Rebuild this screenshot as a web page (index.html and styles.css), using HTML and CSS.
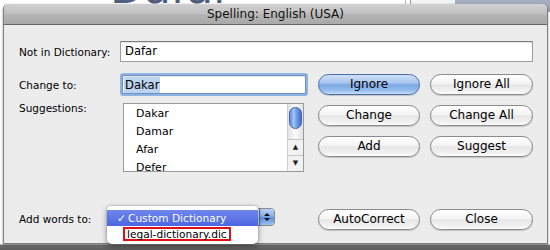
FILE: index.html
```html
<!DOCTYPE html>
<html lang="en">
<head>
    <meta charset="UTF-8">
    <meta name="viewport" content="width=device-width, initial-scale=1.0">
    <title>Spelling: English (USA)</title>
    <link rel="stylesheet" href="styles.css">
</head>
<body>
    <div class="screen">
        <!-- document window behind the sheet -->
        <div class="doc">
            <div class="doc-page">
                <span class="doc-word">Dafar</span>
            </div>
            <div class="doc-scroll"></div>
            <div class="doc-side"></div>
        </div>

        <div class="dialog">
            <div class="titlebar">Spelling: English (USA)</div>
            <div class="dialog-body">
                <div class="row-top">
                    <span class="lbl">Not in Dictionary:</span>
                    <div class="field field-wide">Dafar</div>
                </div>

                <div class="main">
                    <div class="left-col">
                        <div class="change-row">
                            <span class="lbl">Change to:</span>
                            <div class="focus-ring">
                                <div class="field field-change"><span class="sel">Dakar</span></div>
                            </div>
                        </div>
                        <div class="sugg-row">
                            <span class="lbl lbl-sugg">Suggestions:</span>
                            <div class="list">
                                <div class="list-items">
                                    <div class="list-item">Dakar</div>
                                    <div class="list-item">Damar</div>
                                    <div class="list-item">Afar</div>
                                    <div class="list-item">Defer</div>
                                </div>
                                <div class="vscroll">
                                    <div class="track"><div class="thumb"></div></div>
                                    <div class="arrow arrow-up">&#9650;</div>
                                    <div class="arrow arrow-down">&#9660;</div>
                                </div>
                            </div>
                        </div>
                    </div>
                    <div class="btn-grid">
                        <button class="btn btn-default">Ignore</button>
                        <button class="btn">Ignore All</button>
                        <button class="btn">Change</button>
                        <button class="btn">Change All</button>
                        <button class="btn">Add</button>
                        <button class="btn">Suggest</button>
                    </div>
                </div>

                <div class="bottom">
                    <div class="left-col bottom-left">
                        <span class="lbl lbl-add">Add words to:</span>
                        <div class="popup">
                            <div class="popup-arrows">
                                <span class="tri-up"></span>
                                <span class="tri-down"></span>
                            </div>
                            <div class="menu">
                                <div class="menu-item menu-item-active"><span class="check">&#10003;</span>Custom Dictionary</div>
                                <div class="menu-item"><span class="marked">legal-dictionary.dic</span></div>
                            </div>
                        </div>
                    </div>
                    <div class="btn-grid btn-grid-bottom">
                        <button class="btn">AutoCorrect</button>
                        <button class="btn">Close</button>
                    </div>
                </div>
            </div>
        </div>
    </div>
</body>
</html>
```

FILE: styles.css
```css
* {
    margin: 0;
    padding: 0;
    box-sizing: border-box;
}

body {
    font-family: 'DejaVu Sans', sans-serif;
    color: #000;
    background: #6f6f6f;
}

.screen {
    position: relative;
    width: 550px;
    height: 250px;
    overflow: hidden;
    background: linear-gradient(to bottom, #ffffff 0, #ffffff 244px, #707070 245px, #5c5c5c 250px);
}

/* Document window behind */
.doc {
    display: flex;
    height: 12px;
}

.doc-page {
    width: 405px;
    background: #fff;
    overflow: hidden;
}

.doc-word {
    display: block;
    margin-top: -34px;
    padding-left: 110px;
    font-family: 'DejaVu Sans', sans-serif;
    font-size: 44px;
    line-height: 44px;
    color: #4e5f7c;
}

.doc-scroll {
    width: 50px;
    background: linear-gradient(to right, #b8b8b8 0, #b8b8b8 1px, #fff 1px, #fff 5px, #9a9a9a 5px, #9a9a9a 6px, #f4f4f4 6px);
}

.doc-side {
    flex: 1;
    background: #a7adc2;
}

/* Dialog sheet */
.dialog {
    position: absolute;
    left: 3px;
    top: 4px;
    width: 545px;
    height: 240px;
    background: #ececec;
    border: 1px solid #7f7f7f;
    border-top: none;
    border-radius: 5px 5px 0 0;
    box-shadow: 0 1px 3px rgba(0,0,0,0.35);
}

.titlebar {
    height: 21px;
    border-radius: 5px 5px 0 0;
    background: linear-gradient(#d0d0d0, #c2c2c2 45%, #b4b4b4 55%, #a9a9a9);
    border-bottom: 1px solid #666;
    text-align: center;
    font-size: 12px;
    line-height: 20px;
    color: #111;
}

.dialog-body {
    padding: 16px 14px 0 15px;
}

.lbl {
    font-size: 10.5px;
    line-height: 14px;
    width: 101px;
    flex-shrink: 0;
}

.row-top {
    display: flex;
    align-items: center;
}

.field {
    background: #fff;
    border: 1px solid #9c9c9c;
    border-top-color: #7e7e7e;
    box-shadow: inset 0 1px 1px rgba(0,0,0,0.12);
    font-size: 11.6px;
    line-height: 19px;
    padding-left: 4px;
}

.field-wide {
    width: 413px;
    height: 21px;
}

.main {
    display: flex;
    margin-top: 11px;
}

.left-col {
    width: 289px;
    flex-shrink: 0;
}

.change-row {
    display: flex;
    align-items: center;
}

.focus-ring {
    width: 188px;
    height: 23px;
    padding: 2px;
    border-radius: 3px;
    background: #8fb3e3;
}

.field-change {
    height: 19px;
    border-color: #6f8fbf;
    line-height: 16px;
    padding-left: 1px;
    padding-top: 1px;
}

.sel {
    display: inline-block;
    background: #bcd3f2;
    padding: 0 1px;
}

.sugg-row {
    display: flex;
    margin-top: 7px;
}

.lbl-sugg {
    margin-top: -2px;
}

.list {
    display: flex;
    margin-left: 3px;
    width: 181px;
    height: 69px;
    background: #fff;
    border: 1px solid #9a9a9a;
    overflow: hidden;
}

.list-items {
    flex: 1;
    padding-top: 1px;
}

.list-item {
    font-size: 11px;
    line-height: 18px;
    padding-left: 12px;
}

.vscroll {
    width: 16px;
    display: flex;
    flex-direction: column;
    border-left: 1px solid #cfcfcf;
    background: #f2f2f2;
}

.track {
    height: 37px;
    padding: 3px 1px 0 1px;
    border-bottom: 1px solid #c4c4c4;
    background: linear-gradient(to right, #e2e2e2, #fafafa 50%, #e2e2e2);
}

.thumb {
    height: 22px;
    border-radius: 7px;
    border: 1px solid #3f63b0;
    background: linear-gradient(to right, #5f8be0, #a9c6f4 35%, #7aa2ea 55%, #3e6ed6);
}

.arrow {
    font-size: 7px;
    line-height: 15px;
    text-align: center;
    color: #222;
}

.arrow-up {
    border-bottom: 1px solid #c8c8c8;
}

/* Buttons */
.btn-grid {
    display: grid;
    grid-template-columns: 102px 103px;
    column-gap: 10px;
    row-gap: 10px;
    margin-left: 10px;
    padding-top: 1px;
    align-content: start;
}

.btn {
    height: 21px;
    border: 1px solid #8a8a8a;
    border-radius: 11px;
    background: linear-gradient(#ffffff, #f4f4f4 45%, #e6e6e6 52%, #f2f2f2 85%, #fdfdfd);
    box-shadow: 0 1px 1px rgba(0,0,0,0.18);
    font-family: 'DejaVu Sans', sans-serif;
    font-size: 12px;
    line-height: 19px;
    color: #000;
    text-align: center;
}

.btn-default {
    border-color: #4c6ea8;
    background: linear-gradient(#cfe0f7, #a9c7ef 40%, #7fa9e6 52%, #94bcef 80%, #c3dcfa);
}

/* Bottom row */
.bottom {
    display: flex;
    margin-top: 36px;
}

.bottom-left {
    display: flex;
    align-items: flex-start;
}

.lbl-add {
    width: 89px;
    line-height: 18px;
    padding-top: 2px;
}

.popup {
    position: relative;
    width: 167px;
    height: 18px;
    border: 1px solid #8a8a8a;
    border-radius: 4px;
    background: linear-gradient(#ffffff, #f0f0f0 50%, #e4e4e4 52%, #f8f8f8);
    display: flex;
    justify-content: flex-end;
}

.popup-arrows {
    width: 15px;
    height: 16px;
    border-radius: 0 3px 3px 0;
    border-left: 1px solid #4c6ea8;
    background: linear-gradient(#b9d2f4, #8ab2ea 45%, #5f90df 55%, #9cc3f2);
    display: flex;
    flex-direction: column;
    align-items: center;
    justify-content: center;
    gap: 2px;
}

.tri-up,
.tri-down {
    width: 0;
    height: 0;
    border-left: 3px solid transparent;
    border-right: 3px solid transparent;
}

.tri-up {
    border-bottom: 3px solid #111;
}

.tri-down {
    border-top: 3px solid #111;
}

.menu {
    position: absolute;
    left: -2px;
    top: -3px;
    width: 151px;
    height: 38px;
    padding-top: 4px;
    background: #fff;
    border-radius: 4px 4px 5px 5px;
    box-shadow: 0 2px 6px rgba(0,0,0,0.4), 0 0 0 1px rgba(0,0,0,0.08);
}

.menu-item {
    height: 16px;
    font-size: 10.6px;
    line-height: 16px;
    padding-left: 16px;
    white-space: nowrap;
}

.menu-item-active {
    padding-left: 10px;
    color: #fff;
    background: linear-gradient(#6f86ec, #4c66e2);
}

.check {
    display: inline-block;
    width: 11px;
}

.marked {
    display: inline-block;
    border: 2px solid #e0101a;
    padding: 0 2px;
    line-height: 10px;
    margin-top: 1px;
}

.btn-grid-bottom {
    padding-top: 1px;
}
```
